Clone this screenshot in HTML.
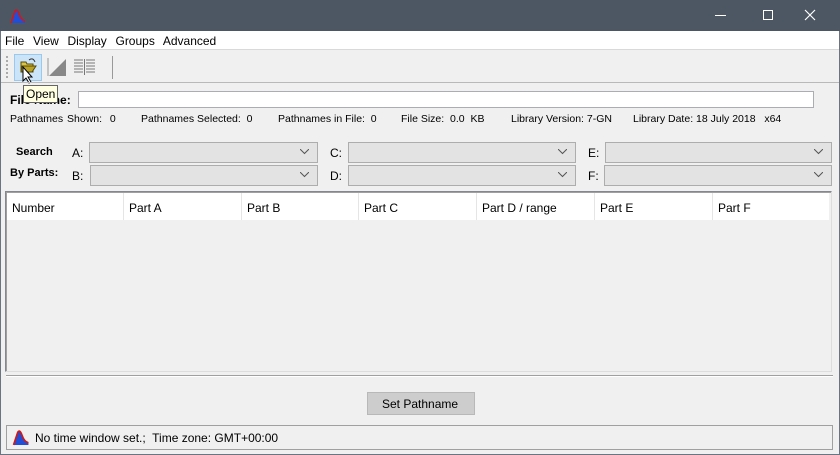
<!DOCTYPE html>
<html><head><style>
*{margin:0;padding:0;box-sizing:border-box}
body{width:840px;height:455px;background:#f0f0f0;font-family:"Liberation Sans",Arial,sans-serif;font-size:12px;color:#000;position:relative;overflow:hidden}
.a{position:absolute}
.t{position:absolute;white-space:nowrap}
.combo{position:absolute;height:21px;background:#e3e3e3;border:1px solid #adadad}
.combo svg{position:absolute;right:8px;top:6px}
.hc{position:absolute;top:0;height:27px;border-right:1px solid #e5e5e5;padding:8px 0 0 5px;font-size:12px}
</style></head><body>
<div class="a" style="left:0;top:0;width:840px;height:455px;border:1px solid #6b7480"></div>
<div class="a" style="left:0;top:0;width:840px;height:31px;background:#4d5764"></div>
<svg class="a" style="left:10px;top:8px" width="16" height="16" viewBox="0 0 16 16"><path d="M1 15 L5 3 Q7 0 9 6 Q11 12 15 13 L15 15Z" fill="#1f4fd8"/><path d="M1 15 L5 3 Q7 0 9 6 Q11 12 15 13" fill="none" stroke="#d01818" stroke-width="1.6"/></svg>
<div class="a" style="left:715px;top:15px;width:11px;height:1px;background:#fff"></div>
<div class="a" style="left:763px;top:10px;width:10px;height:10px;border:1px solid #fff"></div>
<svg class="a" style="left:804px;top:9px" width="12" height="12"><path d="M1 1L11 11M11 1L1 11" stroke="#fff" stroke-width="1.2"/></svg>
<div class="a" style="left:1px;top:31px;width:838px;height:18px;background:#fff"></div>
<div class="t" style="left:5px;top:34px;word-spacing:1px">File&nbsp; View&nbsp; Display&nbsp; Groups&nbsp; Advanced</div>
<div class="a" style="left:1px;top:49px;width:838px;height:1px;background:#d9d9d9"></div>
<div class="a" style="left:6px;top:56px;width:2px;height:22px;border-left:2px dotted #aaa"></div>
<div class="a" style="left:14px;top:54px;width:28px;height:27px;background:#cce4f7;border:1px solid #99c9ef"></div>
<svg class="a" style="left:18px;top:57px" width="20" height="18"><path d="M3 5h5l1 2h6v8H3z" fill="#d8c44a" stroke="#5a4a00"/><path d="M4 9h14l-4 6H3z" fill="#b8a228" stroke="#5a4a00"/><path d="M11 3q4-3 6 2" fill="none" stroke="#333"/></svg>
<svg class="a" style="left:22px;top:66px" width="14" height="18"><path d="M1 1v14l3-3 3 5 2-1-3-5h4z" fill="#fff" stroke="#000"/></svg>
<svg class="a" style="left:46px;top:56px" width="22" height="22"><path d="M2 20V2" stroke="#999"/><path d="M3 20L20 3V20z" fill="#888"/></svg>
<svg class="a" style="left:73px;top:59px" width="24" height="16"><path d="M1 1h9M1 4h9M1 7h9M1 10h9M1 13h9M13 1h9M13 4h9M13 7h9M13 10h9M13 13h9" stroke="#777"/><path d="M11.5 0v16" stroke="#777"/></svg>
<div class="a" style="left:112px;top:56px;width:1px;height:23px;background:#999"></div>
<div class="a" style="left:1px;top:82px;width:838px;height:1px;background:#b9b9b9"></div>
<div class="t" style="left:10px;top:93px;font-weight:bold">File Name:</div>
<div class="a" style="left:23px;top:85px;width:35px;height:18px;background:#ffffe1;border:1px solid #666"></div>
<div class="t" style="left:26px;top:87px">Open</div>
<div class="a" style="left:78px;top:91px;width:736px;height:17px;background:#fff;border:1px solid #abadb3"></div>
<div class="t" style="left:10px;top:113px;font-size:10.5px;word-spacing:1px">Pathnames Shown:&nbsp; 0</div>
<div class="t" style="left:141px;top:113px;font-size:10.5px">Pathnames Selected:&nbsp; 0</div>
<div class="t" style="left:278px;top:113px;font-size:10.5px">Pathnames in File:&nbsp; 0</div>
<div class="t" style="left:401px;top:113px;font-size:10.5px">File Size:&nbsp; 0.0&nbsp; KB</div>
<div class="t" style="left:511px;top:113px;font-size:10.5px">Library Version: 7-GN</div>
<div class="t" style="left:633px;top:113px;font-size:10.5px">Library Date: 18 July 2018&nbsp;&nbsp; x64</div>
<div class="t" style="left:16px;top:146px;font-weight:bold;font-size:11px">Search</div>
<div class="t" style="left:10px;top:167px;font-weight:bold;font-size:11px">By Parts:</div>
<div class="t" style="left:72px;top:146px">A:</div><div class="t" style="left:72px;top:169px">B:</div>
<div class="t" style="left:330px;top:146px">C:</div><div class="t" style="left:330px;top:169px">D:</div>
<div class="t" style="left:588px;top:146px">E:</div><div class="t" style="left:588px;top:169px">F:</div>
<div class="combo" style="left:89px;top:142px;width:229px"><svg width="9" height="6"><path d="M0 0l4.5 4.5L9 0" fill="none" stroke="#555"/></svg></div>
<div class="combo" style="left:90px;top:165px;width:228px"><svg width="9" height="6"><path d="M0 0l4.5 4.5L9 0" fill="none" stroke="#555"/></svg></div>
<div class="combo" style="left:348px;top:142px;width:228px"><svg width="9" height="6"><path d="M0 0l4.5 4.5L9 0" fill="none" stroke="#555"/></svg></div>
<div class="combo" style="left:348px;top:165px;width:228px"><svg width="9" height="6"><path d="M0 0l4.5 4.5L9 0" fill="none" stroke="#555"/></svg></div>
<div class="combo" style="left:605px;top:142px;width:227px"><svg width="9" height="6"><path d="M0 0l4.5 4.5L9 0" fill="none" stroke="#555"/></svg></div>
<div class="combo" style="left:604px;top:165px;width:228px"><svg width="9" height="6"><path d="M0 0l4.5 4.5L9 0" fill="none" stroke="#555"/></svg></div>
<div class="a" style="left:5px;top:191px;width:827px;height:181px;border:1px solid #828790;border-right-color:#ddd;border-bottom-color:#ddd;box-shadow:inset 1px 1px 0 #a0a0a0"></div>
<div class="a" style="left:7px;top:193px;width:822px;height:27px;background:#fff">
<div class="hc" style="left:0;width:117px">Number</div>
<div class="hc" style="left:117px;width:118px">Part A</div>
<div class="hc" style="left:235px;width:117px">Part B</div>
<div class="hc" style="left:352px;width:118px">Part C</div>
<div class="hc" style="left:470px;width:118px">Part D / range</div>
<div class="hc" style="left:588px;width:118px">Part E</div>
<div class="hc" style="left:706px;width:116px;border:none">Part F</div>
</div>
<div class="a" style="left:6px;top:375px;width:827px;height:2px;border-top:1px solid #a0a0a0;border-bottom:1px solid #fff"></div>
<div class="a" style="left:367px;top:392px;width:108px;height:23px;background:#cdcdcd;border:1px solid #b8b8b8"></div>
<div class="t" style="left:382px;top:397px">Set Pathname</div>
<div class="a" style="left:6px;top:425px;width:827px;height:25px;border:1px solid #a0a0a0"></div>
<svg class="a" style="left:12px;top:429px" width="18" height="17" viewBox="0 0 16 16"><path d="M1 15 L5 3 Q7 0 9 6 Q11 12 15 13 L15 15Z" fill="#1f4fd8"/><path d="M1 15 L5 3 Q7 0 9 6 Q11 12 15 13" fill="none" stroke="#d01818" stroke-width="1.6"/></svg>
<div class="t" style="left:35px;top:431px">No time window set.;&nbsp; Time zone: GMT+00:00</div>
</body></html>
